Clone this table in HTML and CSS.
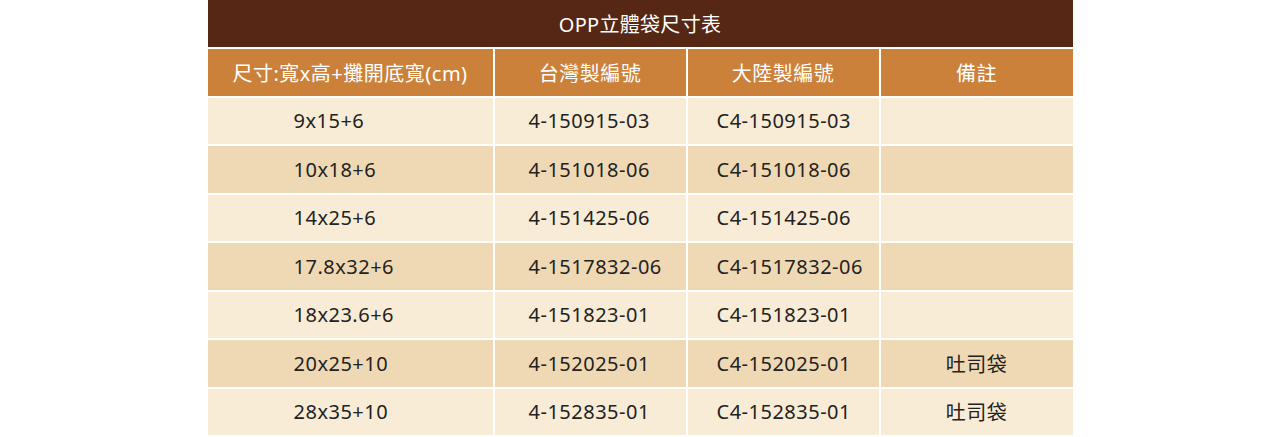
FILE: index.html
```html
<!DOCTYPE html>
<html lang="zh-Hant">
<head>
<meta charset="utf-8">
<title>OPP立體袋尺寸表</title>
<link rel="stylesheet" href="styles.css">
</head>
<body>
<div class="table">
  <div class="title">OPP立體袋尺寸表</div>
  <div class="th">尺寸:寬x高+攤開底寬(cm)</div>
  <div class="th">台灣製編號</div>
  <div class="th">大陸製編號</div>
  <div class="th">備註</div>

  <div class="td c1 odd">9x15+6</div><div class="td c2 odd">4-150915-03</div><div class="td c3 odd">C4-150915-03</div><div class="td c4 odd"></div>
  <div class="td c1 even">10x18+6</div><div class="td c2 even">4-151018-06</div><div class="td c3 even">C4-151018-06</div><div class="td c4 even"></div>
  <div class="td c1 odd">14x25+6</div><div class="td c2 odd">4-151425-06</div><div class="td c3 odd">C4-151425-06</div><div class="td c4 odd"></div>
  <div class="td c1 even">17.8x32+6</div><div class="td c2 even">4-1517832-06</div><div class="td c3 even">C4-1517832-06</div><div class="td c4 even"></div>
  <div class="td c1 odd">18x23.6+6</div><div class="td c2 odd">4-151823-01</div><div class="td c3 odd">C4-151823-01</div><div class="td c4 odd"></div>
  <div class="td c1 even">20x25+10</div><div class="td c2 even">4-152025-01</div><div class="td c3 even">C4-152025-01</div><div class="td c4 even">吐司袋</div>
  <div class="td c1 odd">28x35+10</div><div class="td c2 odd">4-152835-01</div><div class="td c3 odd">C4-152835-01</div><div class="td c4 odd">吐司袋</div>
</div>
</body>
</html>
```
FILE: styles.css
```css
html, body {
  margin: 0;
  padding: 0;
  background: #ffffff;
}
body {
  font-family: "Noto Sans", "Noto Sans CJK TC", sans-serif;
  font-size: 20px;
  letter-spacing: 0.5px;
  color: #222222;
}
.table {
  width: 865px;
  margin: 0 auto;
  display: grid;
  grid-template-columns: 285px 191px 191px 192px;
  grid-template-rows: 47px repeat(8, 46.5px);
  gap: 2px;
  background: #ffffff;
}
.title {
  grid-column: 1 / -1;
  background: #552714;
  color: #ffffff;
  display: flex;
  align-items: center;
  justify-content: center;
  letter-spacing: 0.3px;
}
.th {
  background: #cc813a;
  color: #ffffff;
  display: flex;
  align-items: center;
  justify-content: center;
}
.td {
  display: flex;
  align-items: center;
}
.odd { background: #f8ecd6; }
.even { background: #efd9b4; }
.c1 { padding-left: 86px; }
.c2 { padding-left: 34px; }
.c3 { padding-left: 29px; }
.c4 { justify-content: center; }
```
